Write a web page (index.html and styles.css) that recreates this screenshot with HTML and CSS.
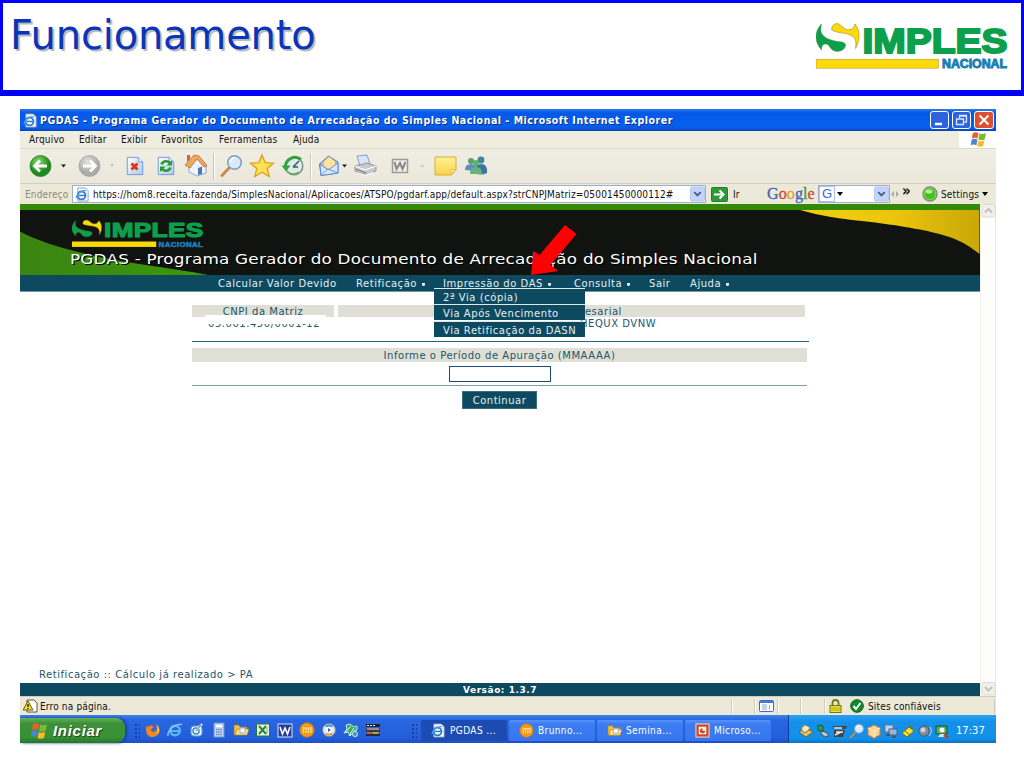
FILE: index.html
```
<!DOCTYPE html>
<html lang="pt-BR">
<head>
  <meta charset="UTF-8">
  <title>Funcionamento</title>
  <link rel="stylesheet" href="styles.css">
</head>
<body>
  <!-- Símbolos reutilizados -->
  <svg class="defs" width="0" height="0">
    <defs>
      <linearGradient id="gold" x1="0" x2="1"><stop offset="0" stop-color="#f0cd10"/><stop offset=".5" stop-color="#edc60c"/><stop offset="1" stop-color="#c9a808"/></linearGradient>
      <linearGradient id="leaf" x1="0" x2="1"><stop offset="0" stop-color="#3b8412"/><stop offset="1" stop-color="#3a9a0a"/></linearGradient>
      <radialGradient id="ball" cx=".4" cy=".3"><stop offset="0" stop-color="#8fdc70"/><stop offset="1" stop-color="#1d8a1d"/></radialGradient>
      <radialGradient id="ballgray" cx=".4" cy=".3"><stop offset="0" stop-color="#e4e4e2"/><stop offset="1" stop-color="#aaa"/></radialGradient>
      <linearGradient id="sheet" x1="0" y1="0" x2="1" y2="1"><stop offset="0" stop-color="#fff"/><stop offset="1" stop-color="#a9c9f4"/></linearGradient>
      <linearGradient id="note" x1="0" y1="0" x2="0" y2="1"><stop offset="0" stop-color="#fff09a"/><stop offset="1" stop-color="#fbd348"/></linearGradient>
    </defs>
    <symbol id="simples-s" viewBox="0 0 44 36">
      <path class="lg-green" d="M5.500 4C1 9 0 13 0 17.300S2 26 5.500 30C5.500 26 7 23.500 10 24C14 24.500 13.500 29 18 30.800C22 32.300 28 31 29.500 26C30 22.500 26 21.800 22 21.500C14 20.500 7 17.500 5 12C4.500 9 5 6 5.500 4z"/>
      <path class="lg-yellow" d="M15.700 9C15.700 6 18 3.500 21 3.500C25 3.700 26 7.500 30 9.200C34 10.500 38 9 39 4C42 8 43.500 12 43 17C42.700 21 41.500 25 39.500 28.500C40.500 23 40 18.500 36 16C30 12 21 13.500 15.700 10z"/>
    </symbol>
    <symbol id="ie" viewBox="0 0 16 16">
      <path d="M3 1h8l3 3v11H3z" fill="#fff" stroke="#8a9cb8"/>
      <circle cx="7" cy="9" r="4.200" fill="none" stroke="#2f7fd0" stroke-width="2"/>
      <path d="M4 9h7" stroke="#2f7fd0" stroke-width="1.600"/><path d="M1 12C2 7 7 3 12 4" fill="none" stroke="#48a5e4" stroke-width="1.300"/>
    </symbol>
    <symbol id="flag" viewBox="0 0 20 18">
      <path d="M4 2c2-1 4-1 6 0L9 8C7 7 5 7 3 8z" fill="#e9602c"/><path d="M11 2.500c2 1 4 1 7 0L16.500 9c-2 1-4.500 1-6.500 0z" fill="#7db831"/>
      <path d="M2.800 9c2-1 4-1 6 0l-1 6c-2-1-4-1-6 0z" fill="#4a86d8"/><path d="M9.800 10c2 1 4 1 6.500 0L15 16c-2 1-4.500 1-6.500 0z" fill="#f5bd29"/>
    </symbol>
    <symbol id="mag" viewBox="0 0 24 24">
      <path d="M9.500 14L2.500 21.500" stroke="#c98a52" stroke-width="3" stroke-linecap="round"/>
      <circle cx="15" cy="8.500" r="6.800" fill="#d7ebfc" stroke="#7c9cc8" stroke-width="1.500"/><path d="M11 8a4 4 0 0 1 4-4" fill="none" stroke="#fff" stroke-width="1.500"/>
    </symbol>
    <symbol id="folder" viewBox="0 0 16 16">
      <path d="M1 3h5l1 2h7v8H1z" fill="#eec04a" stroke="#a27a1c" stroke-width=".7"/><path d="M4 7h12l-2 6H2z" fill="#fce28c" stroke="#a27a1c" stroke-width=".6"/><path d="M7 6h5v5H7z" fill="#f4f7ff" stroke="#6f8fc4" stroke-width=".6"/>
    </symbol>
    <symbol id="orange" viewBox="0 0 16 16">
      <circle cx="8" cy="8" r="7.200" fill="#f39a18" stroke="#d87704" stroke-width=".8"/><path d="M4.500 5v6M7 5.500V11M9.500 5.500V11M12 5v6M4.500 6h7.500" stroke="#fbe0a0" stroke-width="1.200"/>
    </symbol>
    <symbol id="sheet-page" viewBox="0 0 20 22">
      <path d="M1.500 1.500h12l5 5v14h-17z" fill="url(#sheet)" stroke="#6f93d2"/><path d="M13.500 1.500v5h5" fill="#e8f1ff" stroke="#6f93d2"/>
    </symbol>
    <symbol id="chev" viewBox="0 0 16 16">
      <rect x=".5" y=".5" width="15" height="15" rx="1.500" fill="#c4d5fb" stroke="#b0c4f2"/><path d="M4.500 6L8 9.500 11.500 6" fill="none" stroke="#4d6185" stroke-width="2.200"/>
    </symbol>
  </svg>

  <!-- Cabeçalho do slide -->
  <header class="slide-header">
    <h1>Funcionamento</h1>
    <svg class="logo" viewBox="0 0 192 50" preserveAspectRatio="none">
      <use href="#simples-s" width="44" height="36"/>
      <text class="lg-main" x="46.500" y="32.500" textLength="145" lengthAdjust="spacingAndGlyphs">IMPLES</text>
      <rect class="lg-bar" x="0" y="39.200" width="122.500" height="9"/>
      <text class="lg-sub" x="126" y="48.200" textLength="65" lengthAdjust="spacingAndGlyphs">NACIONAL</text>
    </svg>
  </header>

  <div class="window">
    <div class="titlebar">
      <svg class="i15"><use href="#ie"/></svg>
      <span class="title-text">PGDAS - Programa Gerador do Documento de Arrecadação do Simples Nacional - Microsoft Internet Explorer</span>
      <div class="win-buttons">
        <svg width="19" height="18" viewBox="0 0 19 18"><rect class="wb" x=".5" y=".5" width="18" height="17" rx="2.500"/><path d="M5 13h7" stroke="#fff" stroke-width="2.500"/></svg>
        <svg width="19" height="18" viewBox="0 0 19 18"><rect class="wb" x=".5" y=".5" width="18" height="17" rx="2.500"/><path d="M7.500 7V5h7v6h-2M7 4.500h8M4.500 8h7v5.500h-7zM4 8h8" fill="none" stroke="#dfe9ff" stroke-width="1.300"/></svg>
        <svg width="20" height="18" viewBox="0 0 20 18"><rect class="wb close" x=".5" y=".5" width="19" height="17" rx="2.500"/><path d="M5.500 4.500l9 9M14.500 4.500l-9 9" stroke="#fff" stroke-width="2"/></svg>
      </div>
    </div>

    <div class="menubar">
      <span class="m1">Arquivo</span><span class="m2">Editar</span><span class="m3">Exibir</span><span class="m4">Favoritos</span><span class="m5">Ferramentas</span><span class="m6">Ajuda</span>
      <div class="throbber"><svg width="21" height="17"><use href="#flag"/></svg></div>
    </div>

    <div class="toolbar">
      <svg width="976" height="34" viewBox="0 0 976 34">
        <circle cx="20.500" cy="17" r="10.500" fill="url(#ball)" stroke="#2b7f22" stroke-width=".8"/>
        <path d="M27 17H16M20 11.500L14.500 17l5.500 5.500" fill="none" stroke="#fff" stroke-width="2.800"/>
        <path d="M41 15.500h5l-2.500 3z" fill="#222"/>
        <circle cx="69.500" cy="17" r="10.500" fill="url(#ballgray)" stroke="#a5a5a3" stroke-width=".8"/>
        <path d="M63 17h11M70 11.500l5.500 5.500-5.500 5.500" fill="none" stroke="#fff" stroke-width="2.800"/>
        <path d="M90 15.500h4l-2 2.500z" fill="#bbb"/>
        <use href="#sheet-page" x="105" y="7" width="20" height="20"/>
        <path d="M111.500 14.500l6 6M117.500 14.500l-6 6" stroke="#e23418" stroke-width="3"/>
        <use href="#sheet-page" x="136" y="7" width="20" height="20"/>
        <path d="M141.500 15.500c1.500-4 6-4 8.500-1.500M150.500 18.500c-1.500 4-6 4-8.500 1.500" fill="none" stroke="#2a9a32" stroke-width="2.600"/>
        <path d="M152 11v5.500h-5.500zM140 23v-5.500h5.500z" fill="#2a9a32"/>
        <path d="M169 16v7l8 4 9-3v-9l-7-6z" fill="#eef4fd" stroke="#8aa7d4"/><path d="M165 16l9-10 5 1 8 10-3 1-7-8-7 9z" fill="#f2a85c" stroke="#b46d35" stroke-width=".8"/><path d="M167 6h3v4l-3 3z" fill="#c26a3a"/><path d="M178 26v-7l4-1.500v7.500z" fill="#4e74ba"/>
        <path d="M193.500 4v27M290.500 4v27" stroke="#cbc8b8"/><path d="M194.500 4v27M291.500 4v27" stroke="#fff"/>
        <use href="#mag" x="199" y="5" width="25" height="24"/>
        <path d="M242 6l3.200 7.600 8.300.6-6.300 5.300 2 8-7.200-4.300-7.200 4.300 2-8-6.300-5.300 8.300-.6z" fill="#ffe156" stroke="#dba01b" stroke-width="1.300"/>
        <circle cx="274" cy="17" r="8.800" fill="#dfeae8" stroke="#7b9389" stroke-width="1.500"/><path d="M281 10.500A9.500 9.500 0 0 0 265.500 18" fill="none" stroke="#35a23f" stroke-width="3"/><path d="M261.500 16.500h9l-4.500 6z" fill="#35a23f"/><path d="M268 23q6 4 11 0" fill="none" stroke="#5bb35f" stroke-width="1.500"/><path d="M273 18l6-6M273 18h5" stroke="#365b66" stroke-width="1.500"/>
        <path d="M299.500 15l9-8 9.500 6v11l-17 2.500z" fill="#9fc4f2" stroke="#527fc2"/><path d="M303 13l6-5.500 6.500 5V17l-7 3.500-5-3z" fill="#fde2a2" stroke="#dc9f54" stroke-width=".8"/><path d="M300 15l8 6 10-7v10l-17 2.500z" fill="#d5e7fc" stroke="#527fc2" stroke-width=".8"/><path d="M301 26l7-6 10 4" fill="none" stroke="#719bd5"/>
        <path d="M322 15.500h5l-2.500 3z" fill="#222"/>
        <path d="M337 7l10-1 3 9-10 2z" fill="#d6e6fb" stroke="#86a3cf"/><path d="M335 17l12-3 9 3v5l-11 4-10-4z" fill="#c6c8cc" stroke="#85878b" stroke-width=".8"/><path d="M335 17l10 4 11-4M338 24l7 2.500 8-3" fill="none" stroke="#fff" stroke-width="1.200"/><path d="M336 20l10 4" stroke="#717476"/>
        <path d="M372.500 10.500h15v13h-15z" fill="#ececea" stroke="#9b9b98" stroke-width="1.500"/><path d="M374.500 13l2 7 3.500-6 2.500 6 3-7" fill="none" stroke="#898986" stroke-width="2"/>
        <path d="M400 16h5l-2.500 2.500z" fill="#ccc"/>
        <path d="M415 8h21v12.500l-4.500 5.500H415z" fill="url(#note)" stroke="#d9ac35"/><path d="M436 20.500h-5v5z" fill="#fff0ac" stroke="#d9ac35" stroke-width=".7"/>
        <circle cx="451" cy="12" r="3" fill="#5ba16a"/><path d="M445 21q0-6 6-6t5 7z" fill="#5c8fb9"/><circle cx="461" cy="11" r="3.400" fill="#41849e"/><path d="M454 24q0-9 7-9t6 9q-6 3-13 0z" fill="#3b789e"/><circle cx="456" cy="14" r="3" fill="#5db36e"/><path d="M450 25q0-7 6-7t6 7z" fill="#67b27c"/>
      </svg>
    </div>

    <div class="addressbar">
      <span class="addr-label">Endereço</span>
      <div class="addr-input"><svg class="i15"><use href="#ie"/></svg><span class="url">https://hom8.receita.fazenda/SimplesNacional/Aplicacoes/ATSPO/pgdarf.app/default.aspx?strCNPJMatriz=05001450000112#</span><svg class="i16 end"><use href="#chev"/></svg></div>
      <svg class="go" width="17" height="15" viewBox="0 0 17 15"><rect x=".5" y=".5" width="16" height="14" rx="1" fill="#2c9a3a" stroke="#247d30"/><path d="M3 7.500h9M8.500 3.500l4 4-4 4" fill="none" stroke="#fff" stroke-width="2"/></svg>
      <span class="ir">Ir</span>
      <span class="google"><i class="b">G</i><i class="r">o</i><i class="y">o</i><i class="b">g</i><i class="g">l</i><i class="r">e</i></span>
      <div class="g-input"><b>G</b><svg width="8" height="6" viewBox="0 0 8 6"><path d="M1 1h6L4 5z"/></svg><svg class="i16 end"><use href="#chev"/></svg></div>
      <svg class="handle" width="8" height="10" viewBox="0 0 8 10"><path d="M3 2v6L0 5zM5 2v6l3-3z" fill="#aaa"/></svg>
      <span class="more">»</span>
      <svg class="led" width="16" height="16" viewBox="0 0 16 16"><circle cx="8" cy="8" r="7" fill="#7ed957" stroke="#7c927a" stroke-width="1.500"/><circle cx="8" cy="8" r="5.200" fill="#46c020"/><ellipse cx="7" cy="5.500" rx="3.500" ry="2" fill="#b0f090"/></svg>
      <span class="settings">Settings</span><svg width="8" height="6" viewBox="0 0 8 6"><path d="M1 1h6L4 5z"/></svg>
    </div>

    <!-- Página -->
    <div class="viewport">
      <div class="page">
        <div class="banner">
          <svg class="swoosh" width="960" height="65" viewBox="0 0 960 65"><path d="M0 21.500C18 31 38 37 58 42c40 11 90 15 130 23H0z" fill="url(#leaf)"/><path d="M780 0c20 6 42 9 62 11 35 4 75 10 95 19 9 3.500 16 9 22.500 14V0z" fill="url(#gold)"/></svg>
          <svg class="banner-logo" viewBox="0 0 192 50" preserveAspectRatio="none">
            <use href="#simples-s" width="44" height="36"/>
            <text class="lg-main" x="46.500" y="32.500" textLength="145" lengthAdjust="spacingAndGlyphs">IMPLES</text>
            <rect class="lg-bar" x="0" y="39.200" width="122.500" height="9"/>
            <text class="lg-sub" x="126" y="48.200" textLength="65" lengthAdjust="spacingAndGlyphs">NACIONAL</text>
          </svg>
          <h2>PGDAS - Programa Gerador do Documento de Arrecadação do Simples Nacional</h2>
        </div>
        <nav class="nav">
          <span class="n1">Calcular Valor Devido</span>
          <span class="n2">Retificação <i></i></span>
          <span class="n3">Impressão do DAS <i></i></span>
          <span class="n4">Consulta <i></i></span>
          <span class="n5">Sair</span>
          <span class="n6">Ajuda <i></i></span>
          <div class="submenu">
            <div>2ª Via (cópia)</div>
            <div>Via Após Vencimento</div>
            <div>Via Retificação da DASN</div>
          </div>
        </nav>
        <svg class="arrow" width="46" height="52" viewBox="0 0 46 52"><path d="M0 50L2.500 26l6 4L34 0l11.500 9L19.500 40l8 6z" fill="#f00"/></svg>

        <main class="form">
          <div class="cols">
            <div class="col-cnpj"><div class="head">CNPJ da Matriz</div><div class="val masked">05.001.450/0001-12</div></div>
            <div class="col-name"><div class="head">Nome Empresarial</div><div class="val name">HEQUX DVNW</div></div>
          </div>
          <div class="head period">Informe o Período de Apuração (MMAAAA)</div>
          <div class="field"><input type="text"></div>
          <button>Continuar</button>
        </main>
        <div class="crumb">Retificação :: Cálculo já realizado &gt; PA</div>
        <footer>Versão: 1.3.7</footer>
      </div>
      <div class="scrollbar">
        <svg width="16" height="14" viewBox="0 0 16 14"><rect x="1" y=".5" width="13" height="12.500" rx="1.500" fill="#f1f0ea" stroke="#dcdad0"/><path d="M4 8.500L7.500 5 11 8.500" fill="none" stroke="#c3c2bb" stroke-width="2"/></svg>
        <svg width="16" height="14" viewBox="0 0 16 14"><rect x="1" y=".5" width="13" height="12.500" rx="1.500" fill="#f1f0ea" stroke="#dcdad0"/><path d="M4 5L7.500 8.500 11 5" fill="none" stroke="#c3c2bb" stroke-width="2"/></svg>
      </div>
    </div>

    <div class="statusbar">
      <svg width="15" height="14" viewBox="0 0 15 14"><path d="M4 1h7l3 3v9H4z" fill="#fff" stroke="#555"/><path d="M5 2l5 9H0z" fill="#f7df28" stroke="#6b6000"/><path d="M5 5v3M5 9v1" stroke="#000" stroke-width="1.200"/></svg>
      <span class="err">Erro na página.</span>
      <div class="cells">
        <i class="c1"></i>
        <span class="c3"><svg width="15" height="12" viewBox="0 0 15 12"><rect x=".5" y=".5" width="14" height="11" rx="1" fill="#fff" stroke="#3f66c8"/><path d="M1 2h13" stroke="#4876e0" stroke-width="2"/><path d="M3 5h5M3 7h5M3 9h5M10.500 5v4.500" stroke="#87a4de"/></svg></span>
        <i class="c4"></i><i class="c5"></i>
        <span class="c6"><svg width="13" height="14" viewBox="0 0 13 14"><path d="M3.500 7V4a3 3 0 0 1 6 0v3" fill="none" stroke="#77751c" stroke-width="1.800"/><rect x="1" y="6.500" width="11" height="7" fill="#e9e236" stroke="#77751c"/><path d="M2 9h9M2 11h9" stroke="#b5ad1b"/></svg></span>
        <span class="c7"><svg width="14" height="14" viewBox="0 0 14 14"><circle cx="7" cy="7" r="6.300" fill="#16892c" stroke="#0e5d1f"/><path d="M3.500 7l2.500 3 4.500-6" fill="none" stroke="#fff" stroke-width="2"/></svg>Sites confiáveis</span>
      </div>
    </div>

    <div class="taskbar">
      <div class="start"><svg width="20" height="18"><use href="#flag"/></svg><span>Iniciar</span></div>
      <i class="grip"></i>
      <div class="quick">
        <svg viewBox="0 0 16 16"><circle cx="8" cy="8" r="6" fill="#4a62c4"/><path d="M1.500 4l2 1c2-3 4-1 5 0l-3 3c2 3 5 2 6 0 1-2 0-4-1-6 6 4 5 12-2.500 13C2 16 0 9 1.500 4z" fill="#f08a1d"/><path d="M12 3c3 3 3 7 0 9 1-3 1-6 0-9z" fill="#fbd54a"/></svg>
        <svg viewBox="0 0 16 16"><circle cx="8" cy="8.500" r="4.800" fill="none" stroke="#57b4f5" stroke-width="2.500"/><path d="M4 9h9" stroke="#57b4f5" stroke-width="2"/><path d="M1 14C0 9 8 1 15 2.500" fill="none" stroke="#8ad0fb" stroke-width="1.300"/></svg>
        <svg viewBox="0 0 16 16"><rect x="2" y="4" width="11" height="10" rx="3" fill="#e8f3fb" stroke="#5aa0d5"/><circle cx="7" cy="9" r="3" fill="none" stroke="#3b8cd0" stroke-width="1.500"/><path d="M7 9l6-7" stroke="#e9edf4" stroke-width="2"/><path d="M7 9l5-6" stroke="#4e6178"/></svg>
        <svg viewBox="0 0 16 16"><rect x="3" y="1" width="10" height="14" fill="#c6d8f7" stroke="#6e8fce"/><path d="M5 4h6" stroke="#fff" stroke-width="2"/><path d="M5 7.500h6M5 10h6M5 12.500h6" stroke="#6384c8" stroke-dasharray="1.500 .7" stroke-width="1.400"/></svg>
        <svg><use href="#folder"/></svg>
        <svg viewBox="0 0 16 16"><rect x="1.500" y="2" width="13" height="12" fill="#e9f6e9" stroke="#277b30"/><path d="M4 4l7 8M11 4l-7 8" stroke="#278537" stroke-width="2"/><path d="M12 5v7" stroke="#70ad75"/></svg>
        <svg viewBox="0 0 16 16"><rect x="1" y="2" width="14" height="13" fill="#253a9b" stroke="#dbe2f6"/><path d="M3 5l2.500 7L8 6l2.500 6L13 5" fill="none" stroke="#fff" stroke-width="1.600"/></svg>
        <svg><use href="#orange"/></svg>
        <svg viewBox="0 0 16 16"><circle cx="8" cy="8" r="6.500" fill="#d6e6fa" stroke="#71829b"/><path d="M4 4a6 6 0 0 1 8 0L8 8z" fill="#4b82d9"/><path d="M4 12a6 6 0 0 0 8 0L8 8z" fill="#ea9731"/><circle cx="8" cy="8" r="3.400" fill="#fff"/><path d="M7 6l3 2-3 2z" fill="#2768c4"/></svg>
        <svg viewBox="0 0 16 16"><path d="M3 3l4-1 4 3 3-1v4l-3 1 3 5-5-2-2 2-2-4-4 1 3-4z" fill="#39a66a" stroke="#b9f2d6"/><path d="M2 11l6-7M6 14l5-8" stroke="#e5fff2"/><circle cx="12" cy="12" r="2.500" fill="#3a8fbd" stroke="#cfefff"/></svg>
        <svg viewBox="0 0 16 16"><path d="M1 2h14v3H1z" fill="#202020"/><path d="M2 3.500h9" stroke="#eee" stroke-dasharray="2 1"/><path d="M1 6h14v4H1z" fill="#3b3b3b"/><path d="M2 7h12" stroke="#e8e8e8"/><path d="M2 11h12" stroke="#ef4f30" stroke-width="1.600"/><path d="M1 12h14v2H1z" fill="#262c2c"/><path d="M8 11h5" stroke="#5fe06b" stroke-width="1.600"/></svg>
      </div>
      <i class="grip g2"></i>
      <div class="tasks">
        <div class="task active"><svg class="i15"><use href="#ie"/></svg>PGDAS ...</div>
        <div class="task"><svg class="i15"><use href="#orange"/></svg>Brunno...</div>
        <div class="task"><svg class="i15"><use href="#folder"/></svg>Semina...</div>
        <div class="task"><svg class="i15" viewBox="0 0 16 16"><rect x="1" y="1" width="14" height="14" fill="#d04a25" stroke="#fbe3d8"/><path d="M4 4h8v8H4z" fill="#fff"/><path d="M8 5.500a2.800 2.800 0 1 0 2.800 2.800H8z" fill="#d04a25"/></svg>Microso...</div>
      </div>
      <div class="tray">
        <svg viewBox="0 0 16 16"><path d="M1 9l7-4 7 4-7 5z" fill="#ddc277" stroke="#776532"/><circle cx="7" cy="6" r="3.500" fill="#f5e6b0" stroke="#957327"/><path d="M6 2l6 3-3 2" fill="#fff5ce"/></svg>
        <svg viewBox="0 0 16 16"><path d="M3 2l5 1v5L3 7z" fill="#2ca14a" stroke="#155c28"/><path d="M5 8l6 1 3 4-5 1z" fill="#a5adb0" stroke="#4b5962"/><path d="M7 10l5 2" stroke="#eee"/></svg>
        <svg viewBox="0 0 16 16"><path d="M1 3h14l-1 3H1zM2 7h11l-2 7H2z" fill="#40464a"/><path d="M2 5h8M4 9h7M3 12l6-3" stroke="#e8eaec" stroke-width="1.400"/></svg>
        <svg><use href="#mag"/></svg>
        <svg viewBox="0 0 16 16"><path d="M2 5l6-3 6 3v7l-6 3-6-3z" fill="#ffd293" stroke="#c57f2e"/><path d="M2 5l6 3 6-3M8 8v7" fill="none" stroke="#fff4d8"/></svg>
        <svg viewBox="0 0 16 16"><rect x="2" y="2" width="8" height="7" fill="#bdd6ef" stroke="#5b7698"/><rect x="6" y="6" width="8" height="6" fill="#9cb7d6" stroke="#48617e"/><path d="M3 12h4M9 14h4" stroke="#45586d" stroke-width="2"/></svg>
        <svg viewBox="0 0 16 16"><path d="M2 10l7-6 5 4-7 6z" fill="#f7e239" stroke="#7c6d0b"/><path d="M5 8l5 4M10 5V2l3 2" fill="none" stroke="#7c6d0b"/></svg>
        <svg viewBox="0 0 16 16"><circle cx="7" cy="8" r="5.200" fill="#808d99" stroke="#4b5b6c"/><circle cx="6" cy="7" r="2.500" fill="#c8d3df"/><path d="M13 4q3 4-1 9" fill="none" stroke="#c7dcf1"/></svg>
        <svg viewBox="0 0 16 16"><rect x="2" y="3" width="11" height="8" fill="#4cae5a" stroke="#16542a"/><circle cx="8" cy="7" r="2.500" fill="#fff"/><path d="M4 14h8l-1-3H6z" fill="#dce2dc"/><path d="M10 12l4 2.500" fill="none" stroke="#dd2d18" stroke-width="2.500"/></svg>
        <time>17:37</time>
      </div>
    </div>
  </div>
</body>
</html>
```
FILE: styles.css
```
* { box-sizing: border-box; }
body {
  margin: 0;
  width: 1024px;
  height: 768px;
  overflow: hidden;
  background: #fff;
  font-family: "DejaVu Sans Condensed", "DejaVu Sans", sans-serif;
  font-size: 10px;
  color: #111;
  white-space: nowrap;
}
svg { flex: none; display: block; }
i { font-style: normal; }
.defs { position: absolute; }
.i15 { width: 15px; height: 15px; }
.i16 { width: 15px; height: 16px; }
.end { margin-left: auto; }

/* Logo */
.lg-green { fill: #0da04c; stroke: #5b7a3c; stroke-width: .5px; }
.lg-yellow { fill: #fbd90a; stroke: #8a7a1a; stroke-width: .5px; }
.lg-main { font: bold 35px "Liberation Sans", sans-serif; fill: #0da04c; stroke: #0da04c; stroke-width: 2px; }
.lg-bar { fill: #fbd90a; stroke: #a8921c; stroke-width: .5px; }
.lg-sub { font: bold 12px "Liberation Sans", sans-serif; fill: #1a7fb4; stroke: #1a7fb4; stroke-width: .9px; }
.banner-logo .lg-green,
.banner-logo .lg-yellow,
.banner-logo .lg-bar { stroke: none; }

/* Cabeçalho do slide */
.slide-header {
  display: flex;
  justify-content: space-between;
  height: 96px;
  padding: 17px 13px 0 7px;
  border: 3px solid #0000fe;
  border-bottom-width: 6px;
}
.slide-header h1 {
  margin: -8px 0 0;
  font: 40px/46px "DejaVu Sans", sans-serif;
  letter-spacing: -.2px;
  color: #0a35b8;
  text-shadow: 2px 2px 1px #b4b4bc;
}
.logo { width: 192px; height: 50px; }

/* Janela do navegador */
.window {
  display: flex;
  flex-direction: column;
  width: 976px;
  height: 634px;
  margin: 13px 0 0 20px;
  letter-spacing: .16px;
}
.titlebar {
  display: flex;
  align-items: center;
  height: 22px;
  padding: 0 2px 0 3px;
  background: linear-gradient(#2a7cf5, #0558e6 18%, #0560f2 70%, #0a58de 90%, #0440b4);
  color: #fff;
}
.title-text {
  margin-left: 2px;
  font-weight: bold;
  font-size: 10.500px;
  letter-spacing: .53px;
  text-shadow: 1px 1px 0 #0a2f86;
}
.win-buttons { display: flex; gap: 3px; margin-left: auto; }
.wb { fill: #2c62dc; stroke: #fff; }
.wb.close { fill: #dc5030; }

.menubar {
  display: flex;
  height: 18px;
  padding-left: 9px;
  line-height: 18px;
  background: #efece0;
  border-bottom: 1px solid #dedbce;
}
.menubar span { flex: none; }
.m1 { width: 50px; } .m2 { width: 42px; } .m3 { width: 40px; }
.m4 { width: 58px; } .m5 { width: 74px; }
.throbber { width: 37px; margin-left: auto; padding-left: 9px; background: #fff; }

.toolbar { height: 34px; background: linear-gradient(#f0eee3, #ebe8da); }

.addressbar {
  display: flex;
  align-items: center;
  height: 21px;
  padding-left: 5px;
  background: #ece9d8;
  border-top: 1px solid #d2cfc0;
}
.addr-label { width: 47px; color: #8d8b80; }
.addr-input, .g-input {
  display: flex;
  align-items: center;
  height: 18px;
  background: #fff;
  border: 1px solid #9ab0cc;
}
.addr-input { width: 634px; padding-left: 2px; }
.url { margin-left: 3px; }
.go { margin-left: 5px; }
.ir { width: 33px; margin-left: 5px; }
.google {
  width: 52px;
  padding-left: 1px;
  font: 16px/16px "Liberation Serif", serif;
  letter-spacing: .1px;
  -webkit-text-stroke: .3px;
}
.b { color: #3b63c0; } .r { color: #cf4a35; } .y { color: #e0a52c; } .g { color: #3d9a48; }
.g-input { width: 72px; }
.g-input b { padding: 0 2px; margin-right: 1px; border: 1px solid #a9c4e6; font: 13px/14px "Liberation Sans", sans-serif; color: #3b63c0; }
.handle { margin-left: 1px; }
.more { width: 20px; margin: -6px 0 0 3px; font-weight: bold; font-size: 15px; }
.settings { margin: 0 2px 0 3px; }

/* Página */
.viewport { display: flex; height: 492px; }
.page {
  position: relative;
  display: flex;
  flex-direction: column;
  width: 960px;
  font-family: "DejaVu Sans", sans-serif;
  letter-spacing: .54px;
  color: #24566b;
}
.banner {
  position: relative;
  height: 71px;
  padding: 8px 0 0 52px;
  border-top: 6px solid #348a08;
  background: #10130f;
}
.swoosh { position: absolute; left: 0; top: 0; }
.banner-logo { position: relative; width: 132px; height: 30px; }
.banner h2 {
  position: relative;
  width: max-content;
  margin: 1px 0 0 -2px;
  font: 14px/20px "DejaVu Sans", sans-serif;
  letter-spacing: .19px;
  color: #fff;
  text-shadow: 1px 1px 0 #000;
  transform: scaleX(1.2);
  transform-origin: 0 0;
}
.nav {
  position: relative;
  z-index: 2;
  display: flex;
  height: 17px;
  padding-left: 198px;
  line-height: 17px;
  background: #0d4a60;
  border-bottom: 1px solid #6c98a6;
  color: #e4eef0;
}
.nav span { flex: none; }
.nav i { display: inline-block; width: 3px; height: 3px; margin: 0 0 1px 1px; background: #dfeaec; border-radius: 0 0 2px 2px; }
.n1 { width: 138px; } .n2 { width: 87px; } .n3 { width: 131px; }
.n4 { width: 75px; } .n5 { width: 41px; }
.submenu {
  position: absolute;
  left: 414px;
  top: 13px;
  width: 151px;
}
.submenu div {
  height: 16px;
  margin-bottom: .4px;
  padding-left: 9px;
  line-height: 17px;
  background: #0d4a60;
  border-top: 1px solid #dfe9ec;
}
.arrow { position: absolute; left: 511px; top: 21px; z-index: 3; }

.form { display: flex; flex-direction: column; width: 617px; margin: 13px 0 0 172px; }
.cols { display: flex; gap: 4px; height: 37px; border-bottom: 1px solid #28677a; }
.col-cnpj { width: 142px; }
.col-name { width: 467px; }
.head { height: 12px; background: #dfdfd5; line-height: 13px; text-align: center; }
.val { height: 13px; line-height: 13px; }
.masked {
  position: relative;
  padding-left: 16px;
}
/* tarja sobre o número */
.masked::before {
  content: "";
  position: absolute;
  left: 13px;
  top: -2px;
  width: 121px;
  height: 9px;
  background: #fff;
}
.name { padding-left: 242px; }
.period { width: 615px; height: 14px; margin-top: 6px; line-height: 15px; }
.field {
  display: flex;
  justify-content: center;
  width: 615px;
  height: 24px;
  padding-top: 4px;
  border-bottom: 1px solid #7b9ea8;
}
.field input { width: 102px; height: 16px; padding: 0; border: 1px solid #1b4d78; background: #fff; }
.form button {
  width: 75px;
  height: 18px;
  margin: 5px 0 0 270px;
  padding: 0;
  border: 1px solid #3a6c7d;
  background: #0d4a60;
  color: #e4eef0;
  font: 10px/15px "DejaVu Sans", sans-serif;
  letter-spacing: .5px;
}
.crumb { margin: auto 0 1px 19px; line-height: 14px; }
.page footer {
  height: 13px;
  background: #0d4a60;
  color: #fff;
  font-weight: bold;
  font-size: 9px;
  line-height: 14px;
  text-align: center;
}
.scrollbar {
  display: flex;
  flex-direction: column;
  justify-content: space-between;
  width: 16px;
  background: #fdfdfb;
  border-left: 1px solid #f0efea;
  border-right: 1px solid #e8e7e0;
}

.statusbar {
  display: flex;
  align-items: center;
  height: 19px;
  padding: 0 1px 0 3px;
  background: #ece9d8;
  border-top: 1px solid #cfccc0;
}
.err { margin-left: 2px; }
.cells { display: flex; height: 15px; margin-left: auto; border-right: 1px solid #cfccbc; }
.cells > * { border-left: 1px solid #cfccbc; box-shadow: inset 1px 0 #fff; }
.c1, .c4 { width: 23px; }
.c3 { width: 23px; padding: 1px 0 0 4px; }
.c5 { width: 24px; }
.c6 { width: 26px; padding-left: 4px; }
.c7 { display: flex; align-items: center; gap: 4px; width: 144px; }
.cells .c7 { border-left: 0; box-shadow: none; }

/* Barra de tarefas */
.taskbar {
  display: flex;
  height: 28px;
  background: linear-gradient(#3a84ee, #2a66e0 18%, #245edb 80%, #1c4fc4);
  color: #fff;
}
.start {
  display: flex;
  align-items: center;
  width: 105px;
  height: 25px;
  margin-top: 3px;
  padding-left: 9px;
  gap: 4px;
  border-radius: 0 9px 9px 0;
  background: linear-gradient(#65b05c, #3c9038 22%, #389238 75%, #2a7528);
  box-shadow: 2px 0 3px #173f9f;
  font: italic bold 15px "Liberation Sans", sans-serif;
  letter-spacing: .7px;
  text-shadow: 1px 1px 1px #1c4419;
}
.grip { width: 6px; margin: 8px 0 4px 9px; background: radial-gradient(#173f9c 1px, transparent 1px) 0 0 / 4px 4px; }
.quick { display: flex; gap: 6px; padding: 7px 0 0 5px; }
.quick svg { width: 16px; height: 16px; }
.g2 { margin-left: 30px; }
.tasks { display: flex; gap: 2px; margin-left: 4px; padding-top: 5px; }
.task {
  display: flex;
  align-items: center;
  gap: 4px;
  width: 86px;
  height: 21px;
  padding-left: 10px;
  border-radius: 2px;
  background: linear-gradient(#5a92f8, #3c7cf2 20%, #3876ee);
  letter-spacing: .4px;
}
.task.active { background: #1c4cb2; }
.tray {
  display: flex;
  align-items: center;
  width: 208px;
  margin-left: auto;
  padding: 3px 0 0 9px;
  gap: 1px;
  background: linear-gradient(#2aa2f4, #1590ea 25%, #1290e8 85%, #0c70c4);
  border-left: 1px solid #0b3f9c;
}
.tray svg { width: 16px; height: 16px; }
.tray time { margin-left: 5px; font-family: "DejaVu Sans", sans-serif; letter-spacing: 0; }
```
